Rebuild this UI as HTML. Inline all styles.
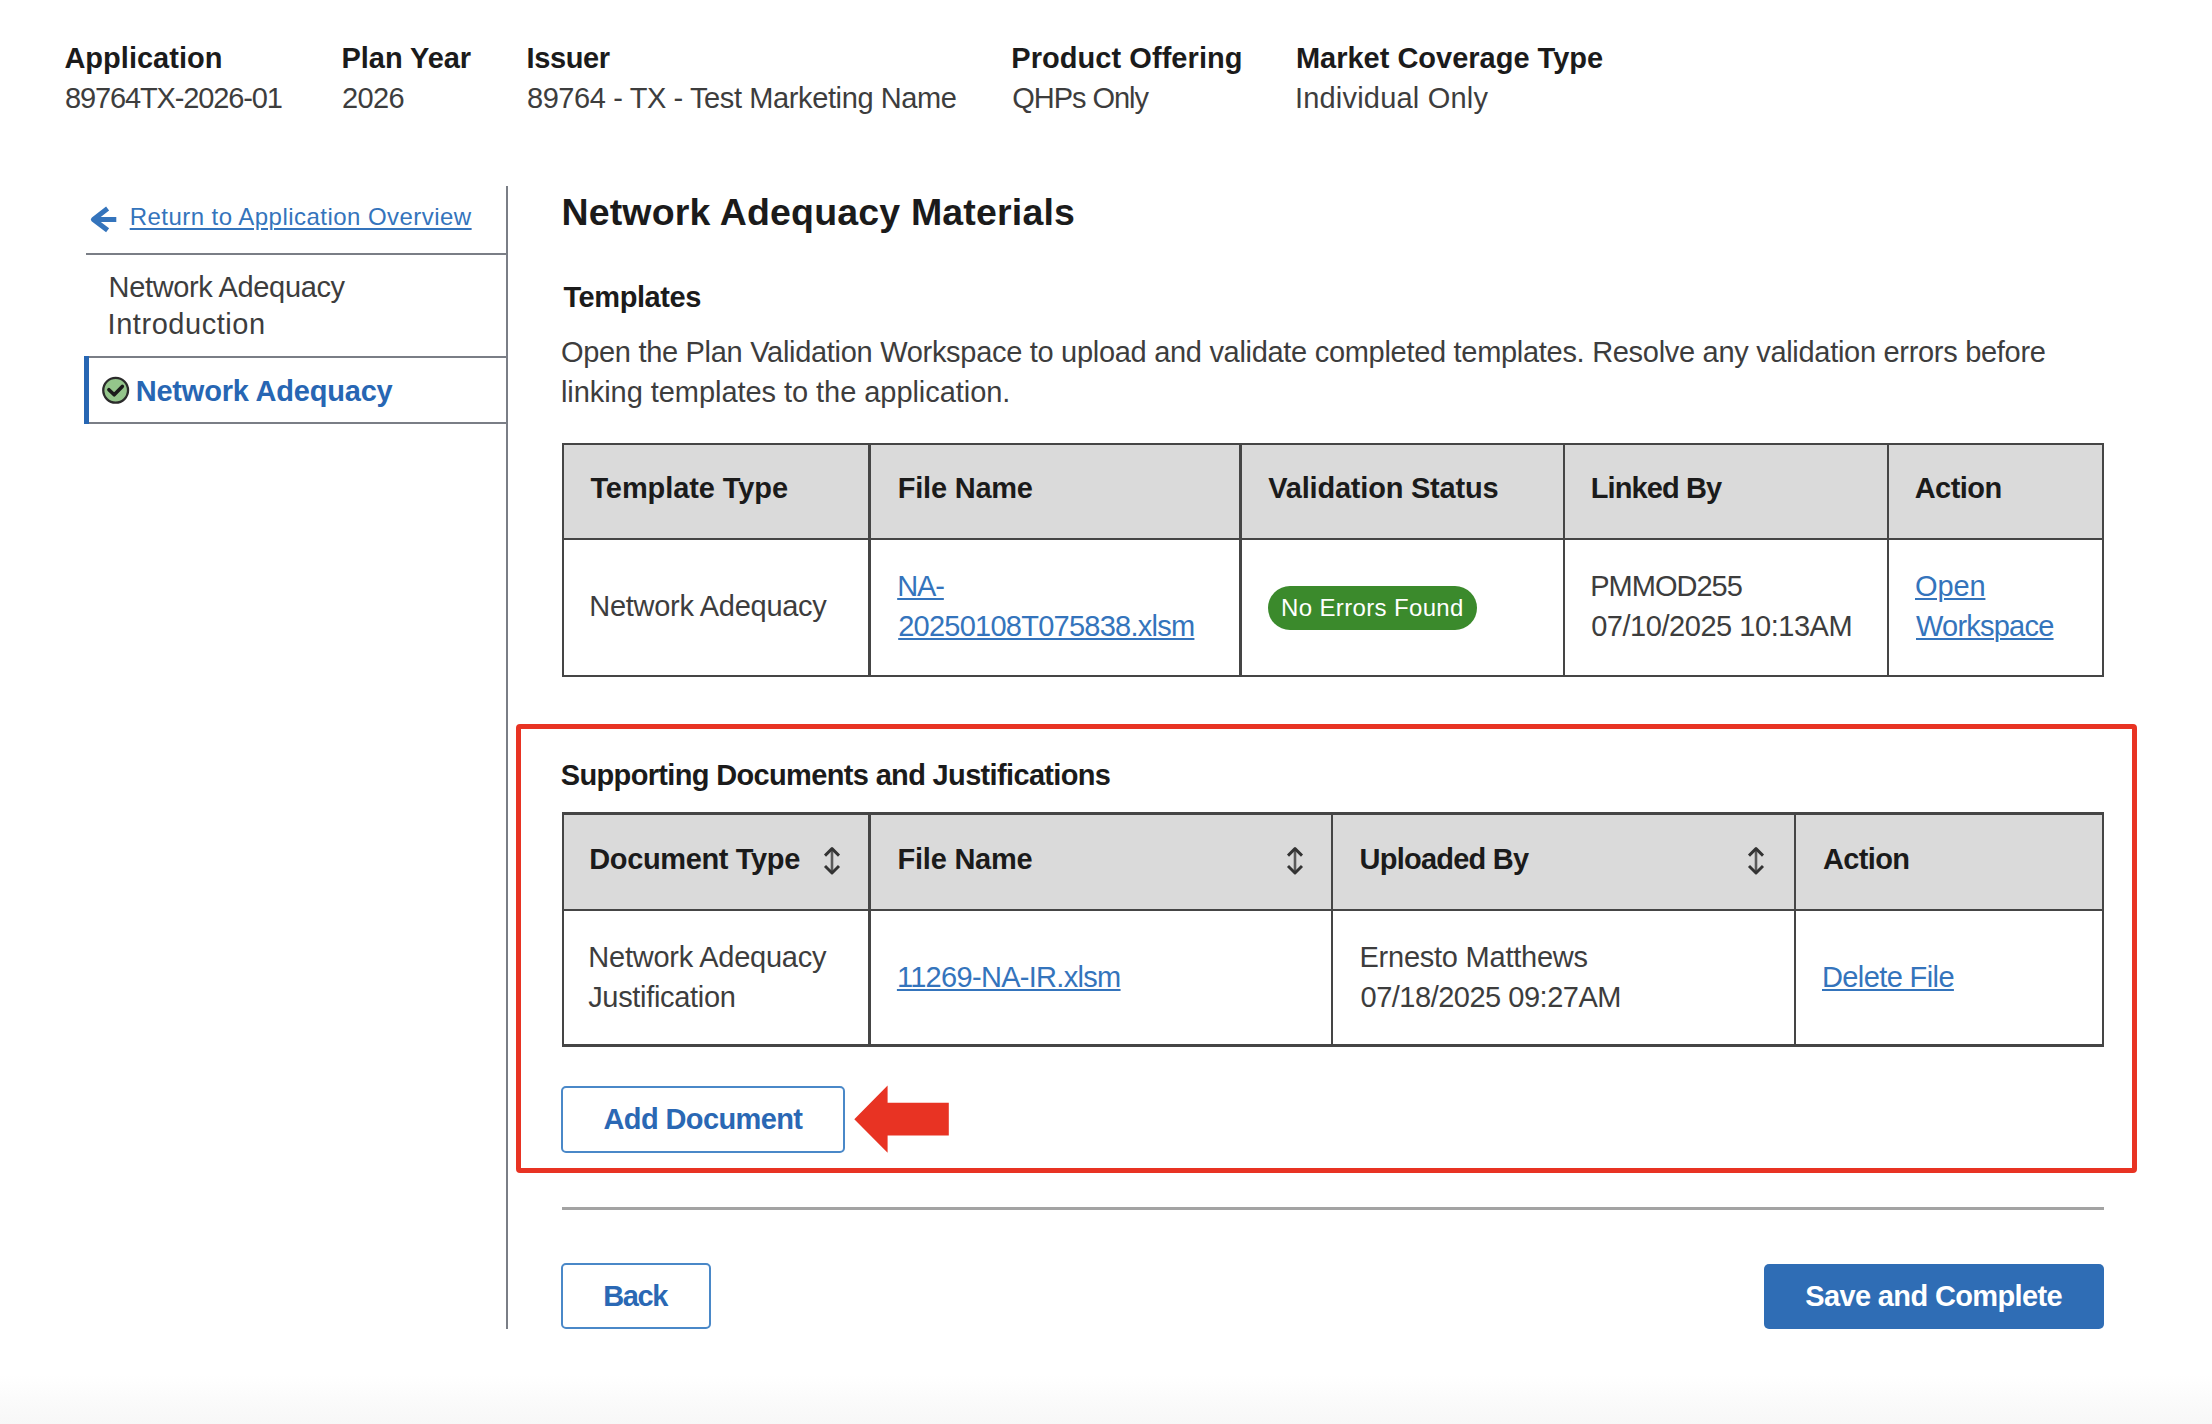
<!DOCTYPE html>
<html><head><meta charset="utf-8"><title>Network Adequacy Materials</title>
<style>
html,body{margin:0;padding:0;}
body{width:2212px;height:1424px;position:relative;overflow:hidden;background:#fff;font-family:"Liberation Sans",sans-serif;}
.bg{position:absolute;left:0;top:0;width:2212px;height:1424px;background:linear-gradient(to bottom,#ffffff 0px,#ffffff 1375px,#f7f7f7 1424px);}
.t{position:absolute;white-space:nowrap;line-height:1;}
.r{position:absolute;}
svg.r{overflow:visible}
</style></head>
<body><div class="bg"></div>
<div class="r" style="left:505.50px;top:185.50px;width:2.00px;height:1143.50px;background:#7a7e86;"></div>
<div class="r" style="left:86.00px;top:253.00px;width:421.50px;height:2.00px;background:#7a7e86;"></div>
<div class="r" style="left:84.00px;top:356.30px;width:423.50px;height:2.00px;background:#7a7e86;"></div>
<div class="r" style="left:84.00px;top:422.00px;width:423.50px;height:2.00px;background:#7a7e86;"></div>
<div class="r" style="left:84.00px;top:356.30px;width:5.00px;height:67.70px;background:#2766b3;"></div>
<svg class="r" style="left:88px;top:205px" width="34" height="30" viewBox="88 205 34 30"><path d="M116.3 219.4 H94 M107.6 208.6 L93.4 219.4 L107.6 230.2" fill="none" stroke="#3474bc" stroke-width="5" stroke-linecap="butt" stroke-linejoin="round"/></svg>
<svg class="r" style="left:100px;top:375px" width="32" height="32" viewBox="100 375 32 32"><circle cx="115.65" cy="390.3" r="12.4" fill="#94c58b" stroke="#2b2b2b" stroke-width="2.3"/><path d="M108.9 389.7 L114.2 394.8 L122.3 386.4" fill="none" stroke="#1b1b1b" stroke-width="3.6" stroke-linecap="round" stroke-linejoin="round"/></svg>
<div class="r" style="left:562.80px;top:443.70px;width:1540.50px;height:95.00px;background:#dadada;"></div><div class="r" style="left:561.60px;top:442.50px;width:1542.90px;height:2.40px;background:#454545;"></div><div class="r" style="left:561.60px;top:537.50px;width:1542.90px;height:2.40px;background:#454545;"></div><div class="r" style="left:561.60px;top:674.60px;width:1542.90px;height:2.40px;background:#454545;"></div><div class="r" style="left:561.60px;top:442.50px;width:2.40px;height:234.50px;background:#454545;"></div><div class="r" style="left:868.20px;top:442.50px;width:2.40px;height:234.50px;background:#454545;"></div><div class="r" style="left:1239.20px;top:442.50px;width:2.40px;height:234.50px;background:#454545;"></div><div class="r" style="left:1563.10px;top:442.50px;width:2.40px;height:234.50px;background:#454545;"></div><div class="r" style="left:1886.60px;top:442.50px;width:2.40px;height:234.50px;background:#454545;"></div><div class="r" style="left:2102.10px;top:442.50px;width:2.40px;height:234.50px;background:#454545;"></div>
<div class="r" style="left:1268px;top:585.5px;width:209px;height:44px;border-radius:22px;background:#3b8a2c"></div>
<div class="r" style="left:515.5px;top:723.8px;width:1621.8px;height:449.1px;box-sizing:border-box;border:5.8px solid #e83323;border-radius:4px"></div>
<div class="r" style="left:562.80px;top:813.40px;width:1540.50px;height:96.40px;background:#dadada;"></div><div class="r" style="left:561.60px;top:812.20px;width:1542.90px;height:2.40px;background:#454545;"></div><div class="r" style="left:561.60px;top:908.60px;width:1542.90px;height:2.40px;background:#454545;"></div><div class="r" style="left:561.60px;top:1044.20px;width:1542.90px;height:2.40px;background:#454545;"></div><div class="r" style="left:561.60px;top:812.20px;width:2.40px;height:234.40px;background:#454545;"></div><div class="r" style="left:868.20px;top:812.20px;width:2.40px;height:234.40px;background:#454545;"></div><div class="r" style="left:1330.85px;top:812.20px;width:2.40px;height:234.40px;background:#454545;"></div><div class="r" style="left:1793.50px;top:812.20px;width:2.40px;height:234.40px;background:#454545;"></div><div class="r" style="left:2102.10px;top:812.20px;width:2.40px;height:234.40px;background:#454545;"></div>
<svg class="r" style="left:820.40px;top:843px" width="24" height="36" viewBox="820.40 843 24 36"><path d="M832.4 850 V871.5" stroke="#5a5a5a" stroke-width="2.6" fill="none"/><path d="M825.4 855.6 L832.4 848.6 L839.4 855.6 M825.4 866 L832.4 873 L839.4 866" stroke="#333" stroke-width="2.9" fill="none" stroke-linecap="butt" stroke-linejoin="round"/></svg>
<svg class="r" style="left:1283.30px;top:843px" width="24" height="36" viewBox="1283.30 843 24 36"><path d="M1295.3 850 V871.5" stroke="#5a5a5a" stroke-width="2.6" fill="none"/><path d="M1288.3 855.6 L1295.3 848.6 L1302.3 855.6 M1288.3 866 L1295.3 873 L1302.3 866" stroke="#333" stroke-width="2.9" fill="none" stroke-linecap="butt" stroke-linejoin="round"/></svg>
<svg class="r" style="left:1744.10px;top:843px" width="24" height="36" viewBox="1744.10 843 24 36"><path d="M1756.1 850 V871.5" stroke="#5a5a5a" stroke-width="2.6" fill="none"/><path d="M1749.1 855.6 L1756.1 848.6 L1763.1 855.6 M1749.1 866 L1756.1 873 L1763.1 866" stroke="#333" stroke-width="2.9" fill="none" stroke-linecap="butt" stroke-linejoin="round"/></svg>
<div class="r" style="left:561.3px;top:1086.4px;width:283.4px;height:66.7px;box-sizing:border-box;border:2.5px solid #4a88c8;border-radius:5px;background:#fff"></div>
<svg class="r" style="left:850px;top:1080px" width="104" height="78" viewBox="850 1080 104 78"><path d="M854.3 1119.3 L887.6 1085.6 L887.6 1102.7 L948.8 1102.7 L948.8 1135.4 L887.6 1135.4 L887.6 1152.7 Z" fill="#e83323"/></svg>
<div class="r" style="left:561.60px;top:1207.40px;width:1542.10px;height:2.80px;background:#a3a3a3;"></div>
<div class="r" style="left:561.4px;top:1262.7px;width:149.8px;height:66.3px;box-sizing:border-box;border:2.5px solid #4a88c8;border-radius:5px;background:#fff"></div>
<div class="r" style="left:1763.5px;top:1263.5px;width:340.2px;height:65.3px;border-radius:5px;background:#2f6db5"></div>
<div class="t" style="left:64.40px;top:44px;font-size:29px;font-weight:700;letter-spacing:0.020px;color:#1b1b1b;">Application</div>
<div class="t" style="left:65.00px;top:84px;font-size:29px;font-weight:400;letter-spacing:-1.143px;color:#3d3d3d;">89764TX-2026-01</div>
<div class="t" style="left:341.60px;top:44px;font-size:29px;font-weight:700;letter-spacing:-0.075px;color:#1b1b1b;">Plan Year</div>
<div class="t" style="left:342.10px;top:84px;font-size:29px;font-weight:400;letter-spacing:-0.667px;color:#3d3d3d;">2026</div>
<div class="t" style="left:526.50px;top:44px;font-size:29px;font-weight:700;letter-spacing:-0.380px;color:#1b1b1b;">Issuer</div>
<div class="t" style="left:526.90px;top:84px;font-size:29px;font-weight:400;letter-spacing:-0.390px;color:#3d3d3d;">89764 - TX - Test Marketing Name</div>
<div class="t" style="left:1011.30px;top:44px;font-size:29px;font-weight:700;letter-spacing:0.053px;color:#1b1b1b;">Product Offering</div>
<div class="t" style="left:1012.30px;top:84px;font-size:29px;font-weight:400;letter-spacing:-1.050px;color:#3d3d3d;">QHPs Only</div>
<div class="t" style="left:1295.90px;top:44px;font-size:29px;font-weight:700;letter-spacing:-0.005px;color:#1b1b1b;">Market Coverage Type</div>
<div class="t" style="left:1294.90px;top:84px;font-size:29px;font-weight:400;letter-spacing:0.207px;color:#3d3d3d;">Individual Only</div>
<div class="t" style="left:129.70px;top:205px;font-size:24px;font-weight:400;letter-spacing:0.459px;color:#3474bc;text-decoration:underline;text-decoration-thickness:1.6px;text-underline-offset:3px;">Return to Application Overview</div>
<div class="t" style="left:108.60px;top:273px;font-size:29px;font-weight:400;letter-spacing:-0.353px;color:#3d3d3d;">Network Adequacy</div>
<div class="t" style="left:107.60px;top:310px;font-size:29px;font-weight:400;letter-spacing:0.536px;color:#3d3d3d;">Introduction</div>
<div class="t" style="left:135.70px;top:377px;font-size:29px;font-weight:700;letter-spacing:-0.200px;color:#2766b3;">Network Adequacy</div>
<div class="t" style="left:561.40px;top:194px;font-size:37.5px;font-weight:700;letter-spacing:0.172px;color:#1b1b1b;">Network Adequacy Materials</div>
<div class="t" style="left:563.40px;top:283px;font-size:29px;font-weight:700;letter-spacing:-0.412px;color:#1b1b1b;">Templates</div>
<div class="t" style="left:560.90px;top:338px;font-size:29px;font-weight:400;letter-spacing:-0.299px;color:#3d3d3d;">Open the Plan Validation Workspace to upload and validate completed templates. Resolve any validation errors before</div>
<div class="t" style="left:560.90px;top:378px;font-size:29px;font-weight:400;letter-spacing:-0.053px;color:#3d3d3d;">linking templates to the application.</div>
<div class="t" style="left:590.40px;top:474px;font-size:29px;font-weight:700;letter-spacing:-0.092px;color:#1b1b1b;">Template Type</div>
<div class="t" style="left:897.80px;top:474px;font-size:29px;font-weight:700;letter-spacing:-0.225px;color:#1b1b1b;">File Name</div>
<div class="t" style="left:1268.30px;top:474px;font-size:29px;font-weight:700;letter-spacing:-0.212px;color:#1b1b1b;">Validation Status</div>
<div class="t" style="left:1590.70px;top:474px;font-size:29px;font-weight:700;letter-spacing:-0.900px;color:#1b1b1b;">Linked By</div>
<div class="t" style="left:1914.70px;top:474px;font-size:29px;font-weight:700;letter-spacing:-0.540px;color:#1b1b1b;">Action</div>
<div class="t" style="left:589.30px;top:592px;font-size:29px;font-weight:400;letter-spacing:-0.287px;color:#3d3d3d;">Network Adequacy</div>
<div class="t" style="left:897.20px;top:572px;font-size:29px;font-weight:400;letter-spacing:-1.100px;color:#3474bc;text-decoration:underline;text-decoration-thickness:2px;text-underline-offset:1.5px;">NA-</div>
<div class="t" style="left:898.20px;top:612px;font-size:29px;font-weight:400;letter-spacing:-0.747px;color:#3474bc;text-decoration:underline;text-decoration-thickness:2px;text-underline-offset:1.5px;">20250108T075838.xlsm</div>
<div class="t" style="left:1281.00px;top:596px;font-size:24px;font-weight:400;letter-spacing:0.357px;color:#ffffff;">No Errors Found</div>
<div class="t" style="left:1590.20px;top:572px;font-size:29px;font-weight:400;letter-spacing:-0.986px;color:#3d3d3d;">PMMOD255</div>
<div class="t" style="left:1591.20px;top:612px;font-size:29px;font-weight:400;letter-spacing:-0.459px;color:#3d3d3d;">07/10/2025 10:13AM</div>
<div class="t" style="left:1915.00px;top:572px;font-size:29px;font-weight:400;letter-spacing:-0.133px;color:#3474bc;text-decoration:underline;text-decoration-thickness:2px;text-underline-offset:1.5px;">Open</div>
<div class="t" style="left:1916.00px;top:612px;font-size:29px;font-weight:400;letter-spacing:-0.775px;color:#3474bc;text-decoration:underline;text-decoration-thickness:2px;text-underline-offset:1.5px;">Workspace</div>
<div class="t" style="left:560.80px;top:761px;font-size:29px;font-weight:700;letter-spacing:-0.658px;color:#1b1b1b;">Supporting Documents and Justifications</div>
<div class="t" style="left:589.30px;top:845px;font-size:29px;font-weight:700;letter-spacing:-0.367px;color:#1b1b1b;">Document Type</div>
<div class="t" style="left:897.50px;top:845px;font-size:29px;font-weight:700;letter-spacing:-0.225px;color:#1b1b1b;">File Name</div>
<div class="t" style="left:1359.50px;top:845px;font-size:29px;font-weight:700;letter-spacing:-0.760px;color:#1b1b1b;">Uploaded By</div>
<div class="t" style="left:1823.00px;top:845px;font-size:29px;font-weight:700;letter-spacing:-0.660px;color:#1b1b1b;">Action</div>
<div class="t" style="left:588.30px;top:943px;font-size:29px;font-weight:400;letter-spacing:-0.240px;color:#3d3d3d;">Network Adequacy</div>
<div class="t" style="left:588.20px;top:983px;font-size:29px;font-weight:400;letter-spacing:-0.317px;color:#3d3d3d;">Justification</div>
<div class="t" style="left:896.90px;top:963px;font-size:29px;font-weight:400;letter-spacing:-0.693px;color:#3474bc;text-decoration:underline;text-decoration-thickness:2px;text-underline-offset:1.5px;">11269-NA-IR.xlsm</div>
<div class="t" style="left:1359.50px;top:943px;font-size:29px;font-weight:400;letter-spacing:-0.240px;color:#3d3d3d;">Ernesto Matthews</div>
<div class="t" style="left:1360.50px;top:983px;font-size:29px;font-weight:400;letter-spacing:-0.488px;color:#3d3d3d;">07/18/2025 09:27AM</div>
<div class="t" style="left:1822.00px;top:963px;font-size:29px;font-weight:400;letter-spacing:-0.610px;color:#3474bc;text-decoration:underline;text-decoration-thickness:2px;text-underline-offset:1.5px;">Delete File</div>
<div class="t" style="left:603.50px;top:1105px;font-size:29px;font-weight:700;letter-spacing:-0.609px;color:#2a68b4;">Add Document</div>
<div class="t" style="left:603.30px;top:1282px;font-size:29px;font-weight:700;letter-spacing:-1.433px;color:#2a68b4;">Back</div>
<div class="t" style="left:1805.20px;top:1282px;font-size:29px;font-weight:700;letter-spacing:-0.625px;color:#ffffff;">Save and Complete</div>
</body></html>
